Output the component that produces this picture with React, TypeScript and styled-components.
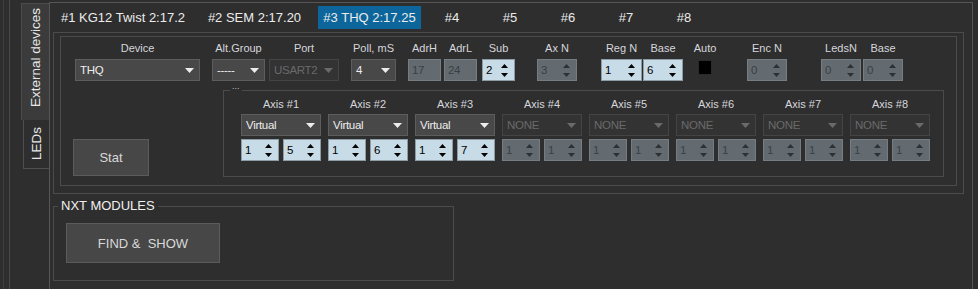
import React from "react";
import styled, { createGlobalStyle, css } from "styled-components";

const Global = createGlobalStyle`
  html, body { margin: 0; padding: 0; background: #2e2e2e; overflow: hidden; }
  body { font-family: "Liberation Sans", Arial, sans-serif; }
  * { box-sizing: border-box; }
`;

const Page = styled.div`
  display: flex;
  width: 978px;
  height: 289px;
  padding-left: 3px;
  background: #2e2e2e;
  overflow: hidden;
`;

const Rail = styled.div`
  display: flex;
  border-left: 1px solid #3f3f3f;
  padding-left: 5px;
`;

const InnerRail = styled.div`
  display: flex;
  border-left: 1px solid #4a4a4a;
  padding-left: 11px;
`;

const SideTabs = styled.div`
  width: 28px;
  flex-shrink: 0;
  display: flex;
  flex-direction: column;
  padding-top: 3px;
`;

const SideTab = styled.div<{ $active?: boolean }>`
  display: flex;
  flex-direction: column;
  align-items: center;
  color: #e8e8e8;
  font-size: 13.5px;
  ${(p) =>
    p.$active
      ? css`
          width: 28px;
          height: 117px;
          padding-top: 4px;
          justify-content: flex-start;
          background: #3b3b3b;
          border-left: 1px solid #4d4d4d;
          border-top: 1px solid #4d4d4d;
        `
      : css`
          width: 26px;
          height: 49px;
          margin-left: 2px;
          justify-content: center;
          border-left: 1px solid #4f4f4f;
          border-bottom: 1px solid #4f4f4f;
        `}
`;

const VerticalText = styled.span`
  writing-mode: vertical-rl;
  transform: rotate(180deg);
  white-space: nowrap;
  line-height: 15px;
`;

const Panel = styled.div`
  width: 924px;
  height: 400px;
  flex-shrink: 0;
  margin-top: 2px;
  border: 1px solid #565656;
  border-bottom: none;
  display: flex;
  flex-direction: column;
`;

const TabStrip = styled.div`
  display: flex;
  height: 29px;
  align-items: flex-start;
`;

const Tab = styled.div<{ $w: number; $ml: number; $active?: boolean }>`
  width: ${(p) => p.$w}px;
  margin-left: ${(p) => p.$ml}px;
  margin-top: 3px;
  height: 23px;
  display: flex;
  align-items: center;
  justify-content: center;
  font-size: 13px;
  color: #ececec;
  white-space: nowrap;
  background: ${(p) => (p.$active ? "#0d669b" : "transparent")};
`;

const OuterBox = styled.div`
  width: 911px;
  height: 162px;
  margin-left: 3px;
  border: 1px solid #4b4b4b;
  padding: 3px 6px 7px 6px;
`;

const InnerBox = styled.div`
  width: 897px;
  height: 150px;
  border: 1px solid #4b4b4b;
  display: flex;
  flex-direction: column;
`;

const ConfigRow = styled.div`
  display: flex;
  padding-top: 4px;
`;

const Field = styled.div<{ $w: number; $ml: number }>`
  width: ${(p) => p.$w}px;
  margin-left: ${(p) => p.$ml}px;
  display: flex;
  flex-direction: column;
  align-items: center;
`;

const FieldLabel = styled.div`
  height: 14px;
  line-height: 14px;
  margin-bottom: 4px;
  font-size: 11px;
  color: #d6d6dc;
  white-space: nowrap;
`;

const inputFont = css`
  font-family: "Liberation Sans", Arial, sans-serif;
  font-size: 11.5px;
  letter-spacing: -0.3px;
`;

const Combo = styled.div<{ $disabled?: boolean }>`
  ${inputFont};
  width: 100%;
  height: 22px;
  display: flex;
  align-items: center;
  justify-content: space-between;
  padding: 0 5px 0 4px;
  white-space: nowrap;
  overflow: hidden;
  background: ${(p) => (p.$disabled ? "#333333" : "#484848")};
  border: 1px solid ${(p) => (p.$disabled ? "#444444" : "#5d5d5d")};
  color: ${(p) => (p.$disabled ? "#6a6a6a" : "#ededed")};
`;

const Spin = styled.div<{ $light?: boolean }>`
  ${inputFont};
  width: 100%;
  height: 22px;
  display: flex;
  align-items: center;
  padding: 0 6px 0 3px;
  background: ${(p) => (p.$light ? "#c8dce7" : "#646b70")};
  border: 1px solid ${(p) => (p.$light ? "#8e9ca5" : "#767d82")};
  color: ${(p) => (p.$light ? "#000000" : "#394045")};
`;

const SpinValue = styled.span`
  flex: 1;
`;

const TextBox = styled.div`
  ${inputFont};
  width: 100%;
  height: 22px;
  display: flex;
  align-items: center;
  padding-left: 3px;
  background: #646b70;
  border: 1px solid #767d82;
  color: #394045;
`;

const Check = styled.div`
  width: 14px;
  height: 15px;
  margin-top: 1px;
  background: #000;
  border: 1px solid #2a2a2a;
`;

const LowerRow = styled.div`
  display: flex;
  margin-top: 9px;
`;

const StatButton = styled.button`
  width: 76px;
  height: 37px;
  margin: 49px 0 0 12px;
  background: #474747;
  border: 1px solid #5b5b5b;
  color: #d8d8d8;
  font-family: "Liberation Sans", Arial, sans-serif;
  font-size: 13px;
  padding: 0;
`;

const AxisGroup = styled.div`
  position: relative;
  width: 721px;
  height: 87px;
  margin-left: 74px;
  border: 1px solid #4b4b4b;
  padding: 6px 0 0 17px;
  display: flex;
  gap: 7px;
`;

const GroupDots = styled.span`
  position: absolute;
  left: 6px;
  top: -10px;
  padding: 0 2px;
  font-size: 9px;
  line-height: 10px;
  color: #bdbdbd;
  background: #2e2e2e;
`;

const AxisCol = styled.div`
  width: 80px;
  display: flex;
  flex-direction: column;
  align-items: center;
`;

const AxisLabel = styled.div`
  height: 14px;
  line-height: 14px;
  margin-bottom: 3px;
  font-size: 11px;
  color: #d6d6dc;
  white-space: nowrap;
`;

const SpinPair = styled.div`
  width: 100%;
  display: grid;
  grid-template-columns: 38px 38px;
  gap: 4px;
  margin-top: 3px;
`;

const NxtGroup = styled.div`
  position: relative;
  width: 401px;
  height: 75px;
  margin: 12px 0 0 3px;
  border: 1px solid #4b4b4b;
  padding: 16px 0 0 12px;
`;

const NxtTitle = styled.span`
  position: absolute;
  left: 4px;
  top: -9px;
  padding: 0 3px;
  font-size: 13px;
  line-height: 15px;
  color: #f0f0f0;
  background: #2e2e2e;
  white-space: nowrap;
`;

const FindButton = styled.button`
  width: 154px;
  height: 40px;
  background: #474747;
  border: 1px solid #5b5b5b;
  color: #d8d8d8;
  font-family: "Liberation Sans", Arial, sans-serif;
  font-size: 13px;
  white-space: pre;
  padding: 0;
`;

const Caret = () => (
  <svg width="9" height="5" viewBox="0 0 9 5">
    <polygon points="0,0 9,0 4.5,5" fill="currentColor" />
  </svg>
);

const Arrows = ({ color }: { color: string }) => (
  <svg width="7" height="13" viewBox="0 0 7 13">
    <polygon points="0,4 3.5,0 7,4" fill={color} />
    <polygon points="0,9 7,9 3.5,13" fill={color} />
  </svg>
);

type FieldDef =
  | { label: string; w: number; ml: number; kind: "combo"; value: string; disabled?: boolean }
  | { label: string; w: number; ml: number; kind: "text"; value: string }
  | { label: string; w: number; ml: number; kind: "spin"; value: string; light?: boolean }
  | { label: string; w: number; ml: number; kind: "check" };

const fields: FieldDef[] = [
  { label: "Device", w: 125, ml: 14, kind: "combo", value: "THQ" },
  { label: "Alt.Group", w: 53, ml: 12, kind: "combo", value: "-----" },
  { label: "Port", w: 70, ml: 4, kind: "combo", value: "USART2", disabled: true },
  { label: "Poll, mS", w: 45, ml: 12, kind: "combo", value: "4" },
  { label: "AdrH", w: 33, ml: 12, kind: "text", value: "17" },
  { label: "AdrL", w: 33, ml: 3, kind: "text", value: "24" },
  { label: "Sub", w: 33, ml: 5, kind: "spin", value: "2", light: true },
  { label: "Ax N", w: 40, ml: 22, kind: "spin", value: "3" },
  { label: "Reg N", w: 41, ml: 24, kind: "spin", value: "1", light: true },
  { label: "Base", w: 40, ml: 1, kind: "spin", value: "6", light: true },
  { label: "Auto", w: 14, ml: 15, kind: "check" },
  { label: "Enc N", w: 40, ml: 35, kind: "spin", value: "0" },
  { label: "LedsN", w: 40, ml: 34, kind: "spin", value: "0" },
  { label: "Base", w: 40, ml: 2, kind: "spin", value: "0" },
];

const tabs = [
  { label: "#1 KG12 Twist 2:17.2", w: 134, ml: 6 },
  { label: "#2 SEM 2:17.20", w: 105, ml: 12 },
  { label: "#3 THQ 2:17.25", w: 103, ml: 11, active: true },
  { label: "#4", w: 58, ml: 2 },
  { label: "#5", w: 58, ml: 0 },
  { label: "#6", w: 58, ml: 0 },
  { label: "#7", w: 58, ml: 0 },
  { label: "#8", w: 58, ml: 0 },
];

const axes = [
  { mode: "Virtual", a: "1", b: "5", on: true },
  { mode: "Virtual", a: "1", b: "6", on: true },
  { mode: "Virtual", a: "1", b: "7", on: true },
  { mode: "NONE", a: "1", b: "1", on: false },
  { mode: "NONE", a: "1", b: "1", on: false },
  { mode: "NONE", a: "1", b: "1", on: false },
  { mode: "NONE", a: "1", b: "1", on: false },
  { mode: "NONE", a: "1", b: "1", on: false },
];

const SpinBox = ({ value, light }: { value: string; light?: boolean }) => (
  <Spin $light={light}>
    <SpinValue>{value}</SpinValue>
    <Arrows color={light ? "#000000" : "#2c3135"} />
  </Spin>
);

const renderControl = (f: FieldDef) => {
  switch (f.kind) {
    case "combo":
      return (
        <Combo $disabled={f.disabled}>
          <span>{f.value}</span>
          <Caret />
        </Combo>
      );
    case "text":
      return <TextBox>{f.value}</TextBox>;
    case "spin":
      return <SpinBox value={f.value} light={f.light} />;
    case "check":
      return <Check />;
  }
};

export default function App() {
  return (
    <>
      <Global />
      <Page>
        <Rail>
          <InnerRail>
            <SideTabs>
              <SideTab $active>
                <VerticalText>External devices</VerticalText>
              </SideTab>
              <SideTab>
                <VerticalText>LEDs</VerticalText>
              </SideTab>
            </SideTabs>
            <Panel>
              <TabStrip>
                {tabs.map((t) => (
                  <Tab key={t.label} $w={t.w} $ml={t.ml} $active={t.active}>
                    {t.label}
                  </Tab>
                ))}
              </TabStrip>
              <OuterBox>
                <InnerBox>
                  <ConfigRow>
                    {fields.map((f, i) => (
                      <Field key={i} $w={f.w} $ml={f.ml}>
                        <FieldLabel>{f.label}</FieldLabel>
                        {renderControl(f)}
                      </Field>
                    ))}
                  </ConfigRow>
                  <LowerRow>
                    <StatButton>Stat</StatButton>
                    <AxisGroup>
                      <GroupDots>...</GroupDots>
                      {axes.map((ax, i) => (
                        <AxisCol key={i}>
                          <AxisLabel>Axis #{i + 1}</AxisLabel>
                          <Combo $disabled={!ax.on}>
                            <span>{ax.mode}</span>
                            <Caret />
                          </Combo>
                          <SpinPair>
                            <SpinBox value={ax.a} light={ax.on} />
                            <SpinBox value={ax.b} light={ax.on} />
                          </SpinPair>
                        </AxisCol>
                      ))}
                    </AxisGroup>
                  </LowerRow>
                </InnerBox>
              </OuterBox>
              <NxtGroup>
                <NxtTitle>NXT MODULES</NxtTitle>
                <FindButton>{"FIND &  SHOW"}</FindButton>
              </NxtGroup>
            </Panel>
          </InnerRail>
        </Rail>
      </Page>
    </>
  );
}
